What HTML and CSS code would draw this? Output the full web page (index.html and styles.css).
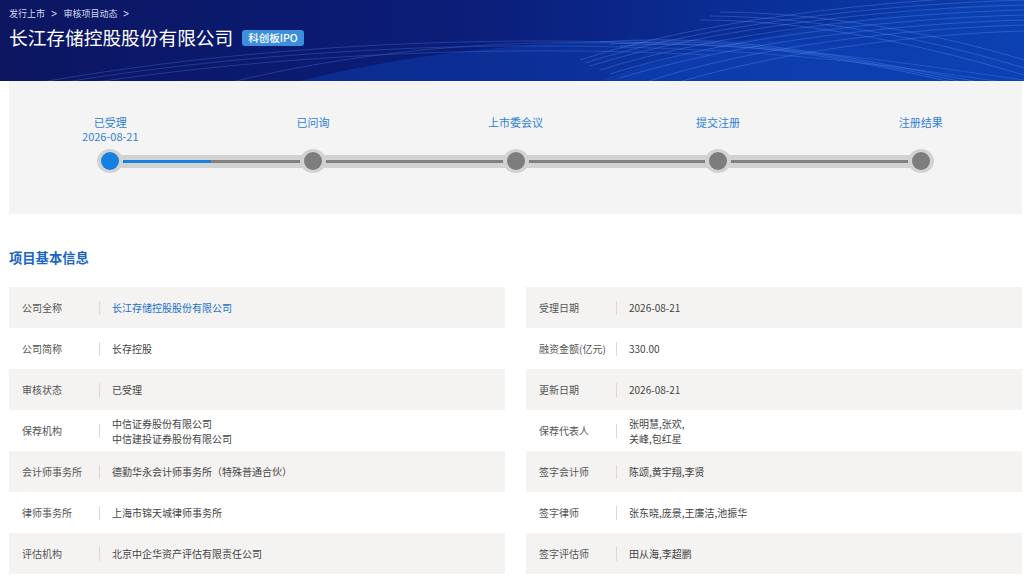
FILE: index.html
```html
<!DOCTYPE html>
<html lang="zh-CN">
<head>
<meta charset="utf-8">
<title>长江存储控股股份有限公司</title>
<link rel="stylesheet" href="styles.css">
</head>
<body>
<header class="hero">
  <svg class="hero-bg" viewBox="0 0 1024 81" preserveAspectRatio="none" aria-hidden="true">
    <defs>
      <linearGradient id="bg" x1="0" y1="0" x2="1" y2="0">
        <stop offset="0" stop-color="#0c1661"/>
        <stop offset="0.45" stop-color="#0b1d78"/>
        <stop offset="0.75" stop-color="#0a2f98"/>
        <stop offset="1" stop-color="#0b3fae"/>
      </linearGradient>
    </defs>
    <rect width="1024" height="81" fill="url(#bg)"/>
    <path d="M300 81 C 500 30, 750 30, 1024 60 L1024 81 Z" fill="#0d3db0" opacity="0.5"/>
    <path d="M600 81 C 700 40, 900 10, 1024 0 L1024 81 Z" fill="#1046bb" opacity="0.4"/>
    <g fill="none" stroke="#6a9fff" stroke-width="0.6" opacity="0.5">
      <path d="M580 60 C 700 20, 880 0, 1024 -5"/>
      <path d="M585 63 C 705 24, 885 4, 1024 0"/>
      <path d="M590 66 C 710 28, 890 8, 1024 5"/>
      <path d="M600 70 C 720 32, 895 13, 1024 10"/>
      <path d="M610 74 C 730 36, 900 18, 1024 15"/>
      <path d="M620 78 C 740 41, 905 23, 1024 20"/>
      <path d="M640 84 C 750 46, 910 28, 1024 25"/>
      <path d="M660 88 C 770 52, 915 34, 1024 31"/>
    </g>
    <g fill="none" stroke="#78a8ff" stroke-width="0.6" opacity="0.45">
      <path d="M600 42 C 760 30, 900 70, 1024 90"/>
      <path d="M610 44 C 770 33, 905 72, 1024 94"/>
      <path d="M620 46 C 780 36, 910 74, 1024 98"/>
      <path d="M700 20 C 820 20, 940 50, 1024 75"/>
      <path d="M710 16 C 830 17, 950 45, 1024 68"/>
      <path d="M720 12 C 840 13, 960 40, 1024 60"/>
    </g>
    <g fill="none" stroke="#5a90ff" stroke-width="0.7" opacity="0.4">
      <path d="M0 90 C 150 60, 400 30, 700 45 C 850 52, 950 70, 1024 80"/>
      <path d="M0 94 C 150 64, 400 35, 700 50 C 850 57, 950 75, 1024 85"/>
      <path d="M0 98 C 160 68, 410 40, 710 55"/>
      <path d="M200 90 C 350 50, 500 38, 650 44"/>
    </g>
  </svg>
  <div class="hero-inner">
    <nav class="crumbs">
      <span>发行上市</span><span class="chev">&gt;</span><span>审核项目动态</span><span class="chev">&gt;</span>
    </nav>
    <div class="title-row">
      <h1 class="title">长江存储控股股份有限公司</h1>
      <span class="badge">科创板IPO</span>
    </div>
  </div>
</header>

<main class="main">
  <section class="progress">
    <div class="step-labels">
      <div class="step-label">已受理<br>2026-08-21</div>
      <div class="step-label">已问询</div>
      <div class="step-label">上市委会议</div>
      <div class="step-label">提交注册</div>
      <div class="step-label">注册结果</div>
    </div>
    <div class="track">
      <span class="track-fill" style="width: 101px"></span>
      <span class="node active"></span>
      <span class="node"></span>
      <span class="node"></span>
      <span class="node"></span>
      <span class="node"></span>
    </div>
  </section>

  <h2 class="section-title">项目基本信息</h2>

  <section class="info">
    <div class="col">
      <div class="row"><div class="k">公司全称</div><div class="v link">长江存储控股股份有限公司</div></div>
      <div class="row"><div class="k">公司简称</div><div class="v">长存控股</div></div>
      <div class="row"><div class="k">审核状态</div><div class="v">已受理</div></div>
      <div class="row"><div class="k">保荐机构</div><div class="v">中信证券股份有限公司<br>中信建投证券股份有限公司</div></div>
      <div class="row"><div class="k">会计师事务所</div><div class="v">德勤华永会计师事务所（特殊普通合伙）</div></div>
      <div class="row"><div class="k">律师事务所</div><div class="v">上海市锦天城律师事务所</div></div>
      <div class="row"><div class="k">评估机构</div><div class="v">北京中企华资产评估有限责任公司</div></div>
    </div>
    <div class="col">
      <div class="row"><div class="k">受理日期</div><div class="v">2026-08-21</div></div>
      <div class="row"><div class="k">融资金额(亿元)</div><div class="v">330.00</div></div>
      <div class="row"><div class="k">更新日期</div><div class="v">2026-08-21</div></div>
      <div class="row"><div class="k">保荐代表人</div><div class="v">张明慧,张欢,<br>关峰,包红星</div></div>
      <div class="row"><div class="k">签字会计师</div><div class="v">陈颂,黄宇翔,李贤</div></div>
      <div class="row"><div class="k">签字律师</div><div class="v">张东晓,庞景,王廉洁,池振华</div></div>
      <div class="row"><div class="k">签字评估师</div><div class="v">田从海,李超鹏</div></div>
    </div>
  </section>
</main>
</body>
</html>
```

FILE: styles.css
```css
* { box-sizing: border-box; }
html, body { margin: 0; padding: 0; }
body {
  background: #ffffff;
  font-family: "Noto Sans CJK SC", "Noto Sans", "Liberation Sans", sans-serif;
  color: #333;
  width: 1024px;
  overflow: hidden;
}

.hero {
  position: relative;
  height: 81px;
  overflow: hidden;
  background: #0c1a6e;
}
.hero-bg {
  position: absolute;
  left: 0; top: 0;
  width: 100%; height: 100%;
  display: block;
}
.hero-inner {
  position: relative;
  padding: 7px 0 0 9px;
}
.crumbs {
  display: flex;
  align-items: center;
  gap: 5px;
  font-size: 9px;
  line-height: 13px;
  color: #d4d9ee;
}
.chev {
  font-family: "DejaVu Sans", sans-serif;
  font-size: 10px;
  color: #d4d9ee;
  transform: scaleX(0.8);
}
.title-row {
  display: flex;
  align-items: center;
  gap: 9px;
  margin-top: 4px;
  height: 26px;
}
.title {
  margin: 0;
  font-size: 18.7px;
  font-weight: 400;
  color: #ffffff;
  line-height: 26px;
}
.badge {
  display: inline-block;
  background: #3b8fdc;
  color: #fff;
  font-size: 10.5px;
  font-weight: 500;
  line-height: 16px;
  height: 16px;
  padding: 0 6px;
  border-radius: 3px;
  margin-top: 2px;
}

.main {
  margin: 0 2px 0 9px;
}
.progress {
  background: #f4f4f4;
  height: 133px;
  padding-top: 35px;
}
.step-labels {
  display: grid;
  grid-template-columns: repeat(5, 1fr);
  height: 32px;
}
.step-label {
  text-align: center;
  font-size: 11px;
  line-height: 13.5px;
  color: #2f80d6;
}
.track {
  position: relative;
  display: flex;
  justify-content: space-between;
  align-items: center;
  height: 26px;
  margin: 0 88px;
}
.track::before {
  content: "";
  position: absolute;
  left: 13px; right: 13px;
  top: 6.5px;
  height: 13px;
  background: #d2d2d2;
}
.track::after {
  content: "";
  position: absolute;
  left: 13px; right: 13px;
  top: 12px;
  height: 3px;
  background: #808080;
}
.track-fill {
  position: absolute;
  left: 13px;
  top: 12px;
  height: 3px;
  background: #1580e0;
  z-index: 1;
}
.node {
  position: relative;
  z-index: 2;
  width: 26px;
  height: 24px;
  border-radius: 50%;
  background: #d2d2d2;
  display: flex;
  align-items: center;
  justify-content: center;
}
.node::before {
  content: "";
  width: 18px;
  height: 18px;
  border-radius: 50%;
  background: #7d7d7d;
}
.node.active::before { background: #1580e0; }

.section-title {
  margin: 35px 0 0 0;
  font-size: 13.3px;
  line-height: 18px;
  font-weight: 700;
  color: #1a66c2;
}

.info {
  display: grid;
  grid-template-columns: 496px 496px;
  column-gap: 21px;
  margin-top: 20px;
}
.row {
  display: flex;
  align-items: center;
  height: 41px;
  font-size: 10px;
  line-height: 15px;
}
.row:nth-child(odd) { background: #f4f3f2; }
.k {
  width: 91px;
  padding-left: 13px;
  color: #555;
  border-right: 1px solid #d9d9d9;
  line-height: 14px;
  height: 14px;
  white-space: nowrap;
}
.v {
  padding-left: 12px;
  color: #444;
}
.v.link { color: #1a6fcc; }
```
